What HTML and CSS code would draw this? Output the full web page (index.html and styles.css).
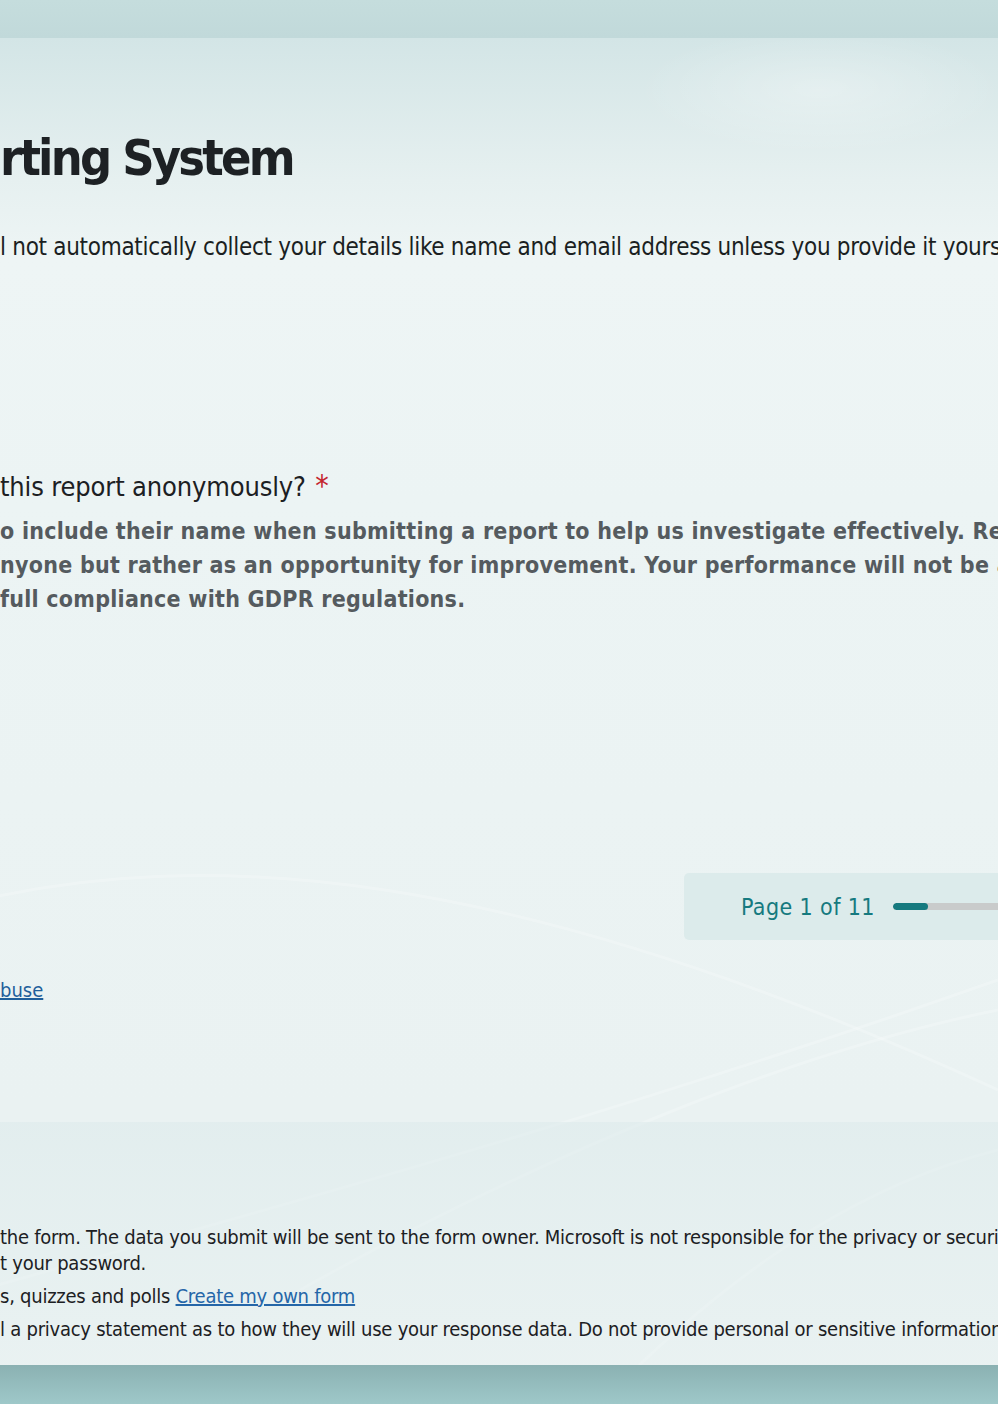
FILE: index.html
```html
<!DOCTYPE html>
<html lang="en">
<head>
<meta charset="utf-8">
<title>Reporting System</title>
<link rel="stylesheet" href="styles.css">
</head>
<body>
<div class="page">
  <div class="top-band"></div>
  <main class="form-card">
    <h1 class="form-title">rting System</h1>
    <p class="intro">l not automatically collect your details like name and email address unless you provide it yourself.</p>
    <section class="question">
      <h2 class="question-title">this report anonymously? <span class="required">*</span></h2>
      <p class="question-desc">o include their name when submitting a report to help us investigate effectively. Res<br>nyone but rather as an opportunity for improvement. Your performance will not be a<br>full compliance with GDPR regulations.</p>
    </section>
    <div class="nav-row">
      <div class="page-box">
        <span class="page-label">Page 1 of 11</span>
        <div class="progress"><div class="progress-fill" style="width: 35px"></div></div>
      </div>
    </div>
    <a class="abuse-link" href="#">buse</a>
  </main>
  <footer class="footer">
    <p class="foot-line">the form. The data you submit will be sent to the form owner. Microsoft is not responsible for the privacy or security<br>t your password.</p>
    <p class="foot-line">s, quizzes and polls <a href="#" class="foot-link">Create my own form</a></p>
    <p class="foot-line">l a privacy statement as to how they will use your response data. Do not provide personal or sensitive information.</p>
  </footer>
  <div class="bottom-band"></div>
</div>
</body>
</html>
```

FILE: styles.css
```css
* { box-sizing: border-box; }

html, body {
  margin: 0;
  padding: 0;
  width: 998px;
  height: 1404px;
  overflow: hidden;
}

body {
  font-family: "DejaVu Sans Condensed", "DejaVu Sans", sans-serif;
  font-stretch: condensed;
  color: #1c2023;
  background: #e9f2f2;
}

.page {
  width: 998px;
  height: 1404px;
  display: flex;
  flex-direction: column;
  overflow: hidden;
  background:
    url("data:image/svg+xml;utf8,<svg xmlns='http://www.w3.org/2000/svg' width='998' height='1404' viewBox='0 0 998 1404'><g fill='none' stroke='white' stroke-opacity='0.22' stroke-width='3'><path d='M-20 900 C 200 850, 500 860, 998 1090'/><path d='M-20 1290 C 300 1200, 600 1120, 998 980'/><path d='M300 1290 C 550 1150, 800 1050, 998 1010'/><path d='M600 1404 C 750 1250, 880 1180, 998 1150'/></g></svg>") no-repeat 0 0,
    radial-gradient(ellipse 260px 90px at 820px 90px, rgba(255,255,255,0.3), rgba(255,255,255,0) 70%),
    linear-gradient(180deg, #d3e5e6 38px, #e6f0f0 180px, #eef5f5 260px, #ecf4f4 500px, #eaf2f2 1100px);
}

.top-band {
  height: 38px;
  flex: none;
  background: linear-gradient(180deg, #c5dddd, #c1d9da);
}

.form-card {
  height: 1084px;
  flex: none;
  padding-top: 90px;
  display: flex;
  flex-direction: column;
  white-space: nowrap;
}

.form-title {
  margin: 0;
  font-size: 50px;
  line-height: 60px;
  font-weight: 700;
  letter-spacing: -2.8px;
  color: #1d2124;
}

.intro {
  margin: 43px 0 0;
  font-size: 24px;
  line-height: 32px;
  letter-spacing: -0.3px;
  color: #1b1f22;
}

.question {
  margin-top: 206px;
}

.question-title {
  margin: 0;
  height: 36px;
  font-size: 27px;
  line-height: 36px;
  font-weight: 400;
  letter-spacing: -0.15px;
  color: #1c2023;
}

.required {
  margin-left: 2px;
  font-size: 30px;
  line-height: 0;
  color: #c4262e;
}

.question-desc {
  margin: 9px 0 0;
  font-size: 23px;
  line-height: 34px;
  font-weight: 700;
  letter-spacing: 0.25px;
  color: #555b5f;
}

.nav-row {
  margin-top: 257px;
  display: flex;
  padding-left: 684px;
}

.page-box {
  flex: none;
  width: 400px;
  height: 67px;
  border-radius: 5px;
  background: #dcebeb;
  display: flex;
  align-items: center;
  padding-left: 57px;
  gap: 18px;
}

.page-label {
  font-size: 23px;
  letter-spacing: 0.4px;
  color: #167a7f;
}

.progress {
  width: 200px;
  height: 7px;
  border-radius: 4px;
  background: #c9cbcb;
  overflow: hidden;
}

.progress-fill {
  height: 100%;
  border-radius: 4px;
  background: #167a7f;
}

.abuse-link {
  margin-top: 36px;
  align-self: flex-start;
  font-size: 20px;
  line-height: 28px;
  color: #1f5f9b;
  text-decoration: underline;
}

.footer {
  height: 243px;
  flex: none;
  padding-top: 102px;
  background: linear-gradient(180deg, rgba(220,234,235,0.55), rgba(232,241,241,0.4));
  white-space: nowrap;
}

.foot-line {
  margin: 0 0 7px;
  font-size: 20px;
  line-height: 26px;
  letter-spacing: -0.25px;
  color: #1c2023;
}

.foot-link {
  color: #2566a8;
  text-decoration: underline;
}

.bottom-band {
  flex: 1;
  background: linear-gradient(180deg, #8bb1b2, #9ec8c9);
}
```
